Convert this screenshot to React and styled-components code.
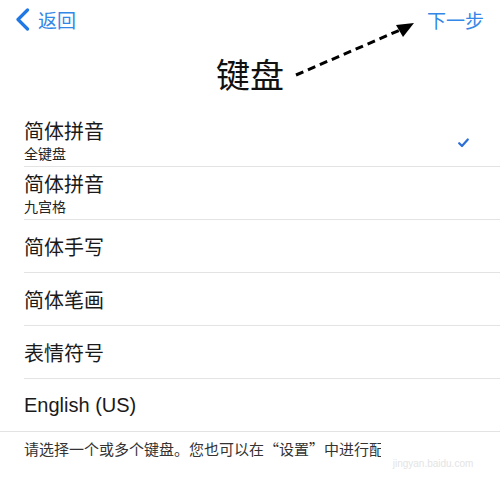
import React from "react";
import styled, { createGlobalStyle } from "styled-components";

const GlobalStyle = createGlobalStyle`
  html, body {
    margin: 0;
    padding: 0;
    background: #ffffff;
  }
  body {
    font-family: "Liberation Sans", "Noto Sans CJK SC", sans-serif;
    color: #111111;
  }
`;

const Screen = styled.div`
  position: relative;
  width: 500px;
  height: 479px;
  overflow: hidden;
  background: #ffffff;
`;

const NavBar = styled.div`
  height: 38px;
  display: flex;
  align-items: center;
  justify-content: space-between;
  padding: 0 16px 0 15px;
`;

const NavButton = styled.div`
  display: flex;
  align-items: center;
  gap: 8px;
  font-family: "Noto Sans CJK SC", sans-serif;
  font-size: 19px;
  color: #3387e6;
  line-height: 1;
`;

const TitleBar = styled.div`
  height: 76px;
  display: flex;
  align-items: center;
  justify-content: center;
`;

const Title = styled.h1`
  margin: 0 0 6px;
  font-family: "Noto Sans CJK SC", sans-serif;
  font-weight: 400;
  font-size: 34px;
  color: #111111;
`;

const List = styled.div`
  display: flex;
  flex-direction: column;
`;

const Row = styled.div`
  box-sizing: border-box;
  height: 53px;
  margin-left: ${p => (p.$full ? 0 : "24px")};
  padding: 0 31px 0 ${p => (p.$full ? "24px" : 0)};
  display: flex;
  align-items: center;
  justify-content: space-between;
  border-bottom: 1px solid #e3e3e3;
`;

const Labels = styled.div`
  display: flex;
  flex-direction: column;
  gap: 4px;
`;

const Label = styled.span`
  font-family: "Noto Sans CJK SC", sans-serif;
  font-size: 20px;
  line-height: 21px;
  color: #1a1a1a;
`;

const EnglishLabel = styled(Label)`
  font-family: "Liberation Sans", sans-serif;
  font-size: 20px;
`;

const SubLabel = styled.span`
  font-family: "Noto Sans CJK SC", sans-serif;
  font-size: 14px;
  line-height: 16px;
  color: #222222;
`;

const CheckMark = styled.svg`
  margin-top: 6px;
`;

const Footer = styled.p`
  margin: 0;
  padding: 6px 0 0 24px;
  font-family: "Noto Sans CJK SC", sans-serif;
  font-size: 15px;
  color: #333333;
  white-space: nowrap;
`;

const Watermark = styled.div`
  position: absolute;
  left: 381px;
  top: 433px;
  width: 104px;
  height: 46px;
  background: #ffffff;
  display: flex;
  align-items: flex-end;
  justify-content: center;
  padding-bottom: 10px;
  box-sizing: border-box;
  font-family: "Liberation Sans", sans-serif;
  font-size: 10px;
  color: #e4e4e4;
`;

const Annotation = styled.svg`
  position: absolute;
  left: 0;
  top: 0;
  pointer-events: none;
`;

const keyboards = [
  { name: "简体拼音", sub: "全键盘", checked: true },
  { name: "简体拼音", sub: "九宫格" },
  { name: "简体手写" },
  { name: "简体笔画" },
  { name: "表情符号" },
];

function BackChevron() {
  return (
    <svg width="15" height="23" viewBox="0 0 15 23">
      <path d="M12.5 2 L3 11.5 L12.5 21" fill="none" stroke="#1f78e4" strokeWidth="3.2" strokeLinecap="round" strokeLinejoin="round" />
    </svg>
  );
}

function Check() {
  return (
    <CheckMark width="11" height="10" viewBox="0 0 11 10">
      <path d="M1.2 5.2 L4 8 L9.8 1.5" fill="none" stroke="#2b6fd6" strokeWidth="2.2" strokeLinecap="round" strokeLinejoin="round" />
    </CheckMark>
  );
}

export default function App() {
  return (
    <Screen>
      <GlobalStyle />
      <NavBar>
        <NavButton>
          <BackChevron />
          返回
        </NavButton>
        <NavButton>下一步</NavButton>
      </NavBar>
      <TitleBar>
        <Title>键盘</Title>
      </TitleBar>
      <List>
        {keyboards.map((k, i) => (
          <Row key={i}>
            <Labels>
              <Label>{k.name}</Label>
              {k.sub && <SubLabel>{k.sub}</SubLabel>}
            </Labels>
            {k.checked && <Check />}
          </Row>
        ))}
        <Row $full>
          <EnglishLabel>English (US)</EnglishLabel>
        </Row>
      </List>
      <Footer>请选择一个或多个键盘。您也可以在“设置”中进行配</Footer>
      <Watermark>jingyan.baidu.com</Watermark>
      <Annotation width="500" height="479" viewBox="0 0 500 479">
        <line x1="296" y1="75" x2="400" y2="30" stroke="#000" strokeWidth="3" strokeDasharray="8 5" />
        <path d="M414 23 L396 25 L403 37 Z" fill="#000" />
      </Annotation>
    </Screen>
  );
}
